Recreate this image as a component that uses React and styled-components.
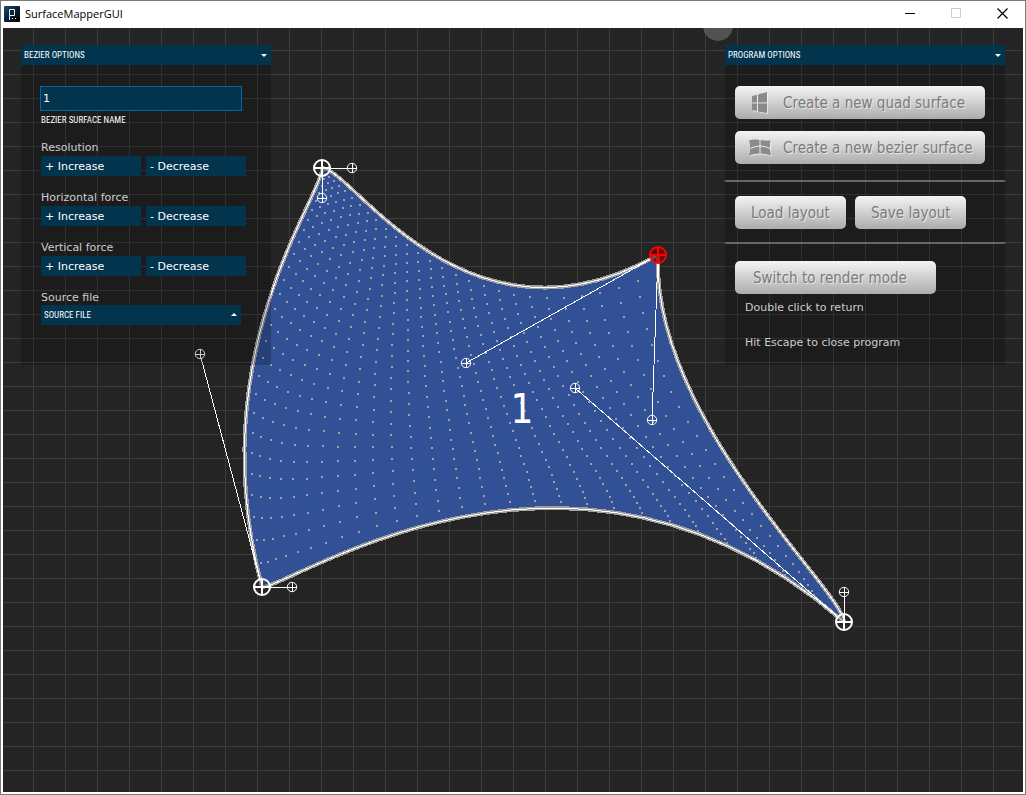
import React from "react";
import styled, { createGlobalStyle } from "styled-components";

const GlobalStyle = createGlobalStyle`
  * { box-sizing: border-box; }
  body { margin: 0; background: #242424; }
  button, input, select { font: inherit; margin: 0; border-radius: 0; }
`;

const uiFont = '"DejaVu Sans", Verdana, sans-serif';
const narrowUiFont = '"DejaVu Sans Condensed", Tahoma, "DejaVu Sans", sans-serif';
const pixelFont = '"Liberation Sans Narrow", "Roboto Condensed", "Liberation Sans", sans-serif';

const Window = styled.div`
  display: flex;
  flex-direction: column;
  min-height: 100vh;
  border: 1px solid #7a7a7a;
  background: #fff;
`;

const TitleBar = styled.header`
  display: flex;
  align-items: center;
  height: 25px;
  padding-left: 3px;
  gap: 5px;
  font: 11px "Open Sans", "Noto Sans", sans-serif;
  color: #000;
`;

const Title = styled.h1`
  flex: 1;
  margin: 0;
  font: inherit;
`;

const WindowControls = styled.div`
  display: flex;
`;

const WindowButton = styled.button`
  display: flex;
  align-items: center;
  justify-content: center;
  width: 46px;
  height: 25px;
  padding: 0;
  border: 0;
  background: transparent;
`;

const Canvas = styled.main`
  position: relative;
  flex: 1;
  display: flex;
  justify-content: space-between;
  align-items: flex-start;
  padding: 17px 18px;
  overflow: hidden;
  border: 2px solid #fff;
  background-color: #242424;
  background-image:
    linear-gradient(to right, #3c3c3c 1px, transparent 1px),
    linear-gradient(to bottom, #3c3c3c 1px, transparent 1px);
  background-size: 32px 24px;
  background-origin: border-box;
  background-clip: padding-box;
`;

const Drawing = styled.svg`
  position: absolute;
  left: -2px;
  top: -2px;
`;

const Panel = styled.section`
  position: relative;
  width: ${(p) => p.$width}px;
  font: 11px/14px ${uiFont};
  color: #ccc;
`;

const PanelHeader = styled.h2`
  display: flex;
  align-items: center;
  justify-content: space-between;
  height: 20px;
  margin: 0;
  padding: 0 4px 0 3px;
  background: #02344d;
  color: #fff;
  font: 9px/22px ${pixelFont};
`;

const PanelBody = styled.div`
  height: 300px;
  padding-top: 21px;
  background: rgba(0, 0, 0, 0.2);
`;

const Fields = styled.div`
  padding: 0 19px;
`;

const NameInput = styled.input`
  display: block;
  width: 202px;
  height: 25px;
  padding: 0 2px;
  border: 1px solid #00699b;
  background: #02344d;
  color: #fff;
  outline: 0;
`;

const NameLabel = styled.label`
  display: block;
  height: 28px;
  padding: 2px 0 0 1px;
  color: #fff;
  font: 9px/14px ${pixelFont};
`;

const Group = styled.div`
  height: 50px;
  padding: 1px 0 0 1px;
`;

const GroupLabel = styled.label`
  display: block;
  height: ${(p) => p.$height}px;
  padding-top: 1px;
`;

const ButtonRow = styled.div`
  display: flex;
  gap: 5px;
`;

const StepButton = styled.button`
  width: 100px;
  height: 20px;
  padding: 2px 4px 0;
  border: 0;
  background: #02344d;
  color: #fff;
  text-align: left;
`;

const SelectBox = styled.div`
  position: relative;
  width: 200px;
`;

const SourceSelect = styled.select`
  display: block;
  width: 100%;
  height: 20px;
  padding: 0 3px;
  border: 0;
  appearance: none;
  background: #02344d;
  color: #fff;
  font: 9px/20px ${pixelFont};
`;

const Arrow = styled.span`
  width: 0;
  height: 0;
  border: 3px solid transparent;
  border-bottom: ${(p) => (p.$up ? "3px solid #fff" : "0")};
  border-top: ${(p) => (p.$up ? "0" : "3px solid #fff")};
`;

const SelectArrow = styled(Arrow)`
  position: absolute;
  right: 4px;
  top: 8px;
  pointer-events: none;
`;

const Actions = styled.div`
  display: flex;
  flex-direction: ${(p) => (p.$row ? "row" : "column")};
  gap: ${(p) => (p.$row ? 9 : 12)}px;
  padding: 0 10px;
`;

const Divider = styled.hr`
  height: 2px;
  margin: ${(p) => p.$top}px 0 ${(p) => p.$bottom}px;
  border: 0;
  background: #666;
`;

const ActionButton = styled.button`
  display: flex;
  align-items: center;
  width: ${(p) => p.$width}px;
  height: 33px;
  padding: 0 0 0 ${(p) => p.$pad}px;
  border: 0;
  border-radius: 5px;
  background: linear-gradient(#f4f4f4, #acacac);
  color: #7b7b7b;
  font: 15px/18px ${narrowUiFont};
  text-shadow: 1px 1px 0 #e8e8e8;
  white-space: nowrap;
`;

const IconSlot = styled.span`
  display: flex;
  justify-content: center;
  width: 24px;
  margin-right: 11px;
`;

const Hints = styled.div`
  display: grid;
  gap: 21px;
  padding: 7px 20px;
`;

const Hint = styled.p`
  margin: 0;
`;

const BigNumber = styled.text`
  font: 40px ${narrowUiFont};
  fill: #fff;
  text-anchor: middle;
`;

/* Surface corners in clockwise order, and the pair of handles of each edge. */
const corners = [[321, 142], [657, 229], [843, 596], [261, 561]];
const edges = {
  top: [corners[0], [351, 142], [465, 337], corners[1]],
  bottom: [corners[3], [291, 561], [574, 362], corners[2]],
  left: [corners[0], [321, 172], [199, 328], corners[3]],
  right: [corners[1], [651, 394], [843, 566], corners[2]],
};
const handles = [
  [corners[0], [351, 142]],
  [corners[0], [321, 172]],
  [corners[1], [465, 337]],
  [corners[1], [651, 394]],
  [corners[2], [574, 362]],
  [corners[2], [843, 566]],
  [corners[3], [291, 561]],
  [corners[3], [199, 328]],
];
const RESOLUTION = 28;

const bezier = ([a, b, c, d], t) => {
  const s = 1 - t;
  return [0, 1].map(
    (k) => a[k] * s * s * s + 3 * b[k] * s * s * t + 3 * c[k] * s * t * t + d[k] * t * t * t
  );
};

/* How far an edge bends away from the straight line between its ends. */
const bend = (edge, t) =>
  bezier(edge, t).map((value, k) => value - (1 - t) * edge[0][k] - t * edge[3][k]);

/* Straight blend of top and bottom, plus side bends that fade towards the middle. */
const surfacePoint = (u, v) => {
  const top = bezier(edges.top, u);
  const bottom = bezier(edges.bottom, u);
  const left = bend(edges.left, v);
  const right = bend(edges.right, v);
  return [0, 1].map(
    (k) => (1 - v) * top[k] + v * bottom[k] + (1 - u) ** 3 * left[k] + u ** 3 * right[k]
  );
};

const steps = Array.from({ length: RESOLUTION + 1 }, (_, i) => i / RESOLUTION);
const outline = [
  ...steps.map((t) => bezier(edges.top, t)),
  ...steps.map((t) => bezier(edges.right, t)),
  ...steps.map((t) => bezier(edges.bottom, 1 - t)),
  ...steps.map((t) => bezier(edges.left, 1 - t)),
].map((p) => p.join(",")).join(" ");

const inner = steps.slice(1, -1);
const dots = inner
  .flatMap((u) => inner.map((v) => surfacePoint(u, v)))
  .map(([x, y]) => `M${Math.round(x) - 1} ${Math.round(y) - 1}h2v2h-2z`)
  .join("");

function Surface() {
  return (
    <Drawing width="1024" height="768" viewBox="0 0 1024 768" aria-hidden="true">
      <g shapeRendering="crispEdges">
        <polygon points={outline} fill="#325096" stroke="#a0a0a0" strokeWidth="4" strokeLinejoin="round" />
        <path d={dots} fill="#a0a0a0" />
        <polygon points={outline} fill="none" stroke="#fff" strokeWidth="1" />
        {handles.map(([a, b], i) => (
          <line key={i} x1={a[0]} y1={a[1]} x2={b[0]} y2={b[1]} stroke="#fff" />
        ))}
      </g>
      {handles.map(([, [x, y]], i) => (
        <g key={i} stroke="#fff" fill="none">
          <circle cx={x} cy={y} r="4.7" />
          <path d={`M${x - 5} ${y + 0.5}h10M${x + 0.5} ${y - 5}v10`} shapeRendering="crispEdges" />
        </g>
      ))}
      {corners.map(([x, y], i) => (
        <g key={i} stroke={i === 1 ? "#f00" : "#fff"} strokeWidth="2">
          <circle cx={x} cy={y} r="8" fill={i === 1 ? "rgba(100,0,0,.7)" : "rgba(36,36,36,.3)"} />
          <path d={`M${x - 8} ${y}h16M${x} ${y - 8}v16`} shapeRendering="crispEdges" />
        </g>
      ))}
      <BigNumber x="521" y="397">1</BigNumber>
      <circle cx="717" cy="0" r="15" fill="#808080" fillOpacity="0.5" />
    </Drawing>
  );
}

function AppIcon() {
  return (
    <svg width="16" height="16" viewBox="0 0 16 16" aria-hidden="true">
      <defs>
        <linearGradient id="app" x1="0" y1="0" x2="1" y2="1">
          <stop offset="0" stopColor="#1c4a70" />
          <stop offset="0.6" stopColor="#06182a" />
          <stop offset="1" stopColor="#000" />
        </linearGradient>
      </defs>
      <rect width="16" height="16" rx="1" fill="url(#app)" />
      <path d="M5.500 14V3.500h5v6h-5" fill="none" stroke="#e4eef4" />
      <path d="M8 12.500h1M11 12.500h1" stroke="#fff" />
    </svg>
  );
}

const quadShape = "M1 4l5-1v7.500H1zM7 2.500l9-2.500v10.500H7zM1 11.500h5V19l-5-1zM7 11.500h9V21l-9-1.500z";
const bezierShape = "M1 1.500Q6 0 12 1T22.500 1.500Q21 9 23 16.500 12 12.500 1 16.500 3.500 9 1 1.500z";

function QuadIcon() {
  return (
    <svg width="18" height="22" viewBox="0 0 18 22" aria-hidden="true">
      <path d={quadShape} fill="#fff" fillOpacity=".6" transform="translate(1 1)" />
      <path d={quadShape} fill="#8a8a8a" />
    </svg>
  );
}

function BezierIcon() {
  return (
    <svg width="24" height="18" viewBox="0 0 24 18" aria-hidden="true">
      <path d={bezierShape} fill="#fff" fillOpacity=".6" transform="translate(1 1)" />
      <path d={bezierShape} fill="#8a8a8a" />
      <path d="M12 1v13.500M2.500 9.500Q12 4.500 22 9.500" fill="none" stroke="#ededed" />
    </svg>
  );
}

function StepGroup({ label }) {
  return (
    <Group role="group" aria-label={label}>
      <GroupLabel as="span" $height={16}>{label}</GroupLabel>
      <ButtonRow>
        <StepButton>+ Increase</StepButton>
        <StepButton>- Decrease</StepButton>
      </ButtonRow>
    </Group>
  );
}

export default function App() {
  return (
    <>
      <GlobalStyle />
      <Window>
        <TitleBar>
          <AppIcon />
          <Title>SurfaceMapperGUI</Title>
          <WindowControls>
            <WindowButton aria-label="Minimize">
              <svg width="11" height="11" viewBox="0 0 11 11"><path d="M0 5.500h10" stroke="#000" /></svg>
            </WindowButton>
            <WindowButton aria-label="Maximize">
              <svg width="11" height="11" viewBox="0 0 11 11"><path d="M.5.5h9v9h-9z" fill="none" stroke="#ccc" /></svg>
            </WindowButton>
            <WindowButton aria-label="Close">
              <svg width="11" height="11" viewBox="0 0 11 11"><path d="M.5.5l10 10M10.500.5l-10 10" stroke="#000" strokeWidth="1.200" /></svg>
            </WindowButton>
          </WindowControls>
        </TitleBar>
        <Canvas>
          <Surface />
          <Panel $width={250}>
            <PanelHeader>BEZIER OPTIONS<Arrow /></PanelHeader>
            <PanelBody>
              <Fields>
                <NameInput id="surface-name" defaultValue="1" />
                <NameLabel htmlFor="surface-name">BEZIER SURFACE NAME</NameLabel>
                <StepGroup label="Resolution" />
                <StepGroup label="Horizontal force" />
                <StepGroup label="Vertical force" />
                <Group>
                  <GroupLabel htmlFor="source-file" $height={15}>Source file</GroupLabel>
                  <SelectBox>
                    <SourceSelect id="source-file">
                      <option>SOURCE FILE</option>
                    </SourceSelect>
                    <SelectArrow $up />
                  </SelectBox>
                </Group>
              </Fields>
            </PanelBody>
          </Panel>
          <Panel $width={280}>
            <PanelHeader>PROGRAM OPTIONS<Arrow /></PanelHeader>
            <PanelBody>
              <Actions>
                <ActionButton $width={250} $pad={13}><IconSlot><QuadIcon /></IconSlot>Create a new quad surface</ActionButton>
                <ActionButton $width={250} $pad={13}><IconSlot><BezierIcon /></IconSlot>Create a new bezier surface</ActionButton>
              </Actions>
              <Divider $top={16} $bottom={14} />
              <Actions $row>
                <ActionButton $width={111} $pad={16}>Load layout</ActionButton>
                <ActionButton $width={111} $pad={16}>Save layout</ActionButton>
              </Actions>
              <Divider $top={13} $bottom={17} />
              <Actions>
                <ActionButton $width={201} $pad={18}>Switch to render mode</ActionButton>
              </Actions>
              <Hints>
                <Hint>Double click to return</Hint>
                <Hint>Hit Escape to close program</Hint>
              </Hints>
            </PanelBody>
          </Panel>
        </Canvas>
      </Window>
    </>
  );
}
